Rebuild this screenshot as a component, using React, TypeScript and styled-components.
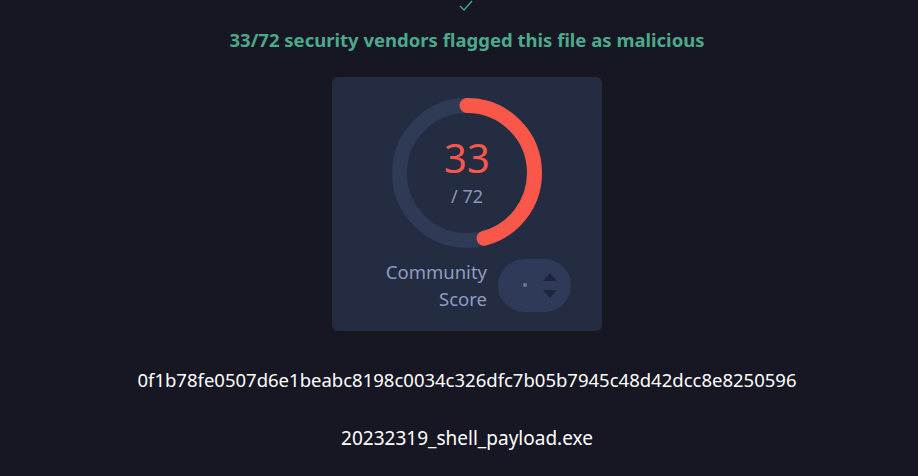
import styled, { createGlobalStyle } from 'styled-components'

const total = 72
const flagged = 33
const ringRadius = 67.5
const ringStroke = 15

const GlobalStyle = createGlobalStyle`
  html, body {
    margin: 0;
    padding: 0;
    background: #171723;
  }
  body {
    font-family: 'Noto Sans', 'Open Sans', sans-serif;
    color: #ffffff;
  }
`

const Page = styled.main`
  display: flex;
  flex-direction: column;
  align-items: center;
  padding-left: 16px;
  min-height: 476px;
  box-sizing: border-box;
`

const CheckMark = styled.svg`
  display: block;
  margin-top: -1px;
  margin-left: -2px;
  width: 16px;
  height: 13px;
`

const Verdict = styled.h2`
  margin: 16px 0 0;
  font-size: 18.5px;
  font-weight: 700;
  line-height: 24px;
  color: #4caa8c;
`

const Card = styled.section`
  margin-top: 25px;
  width: 270px;
  height: 254px;
  box-sizing: border-box;
  padding-top: 21px;
  border-radius: 6px;
  background: #242c42;
  display: flex;
  flex-direction: column;
  align-items: center;
`

const Gauge = styled.div`
  position: relative;
  width: 150px;
  height: 150px;
`

const GaugeLabel = styled.div`
  position: absolute;
  inset: 0;
  display: flex;
  flex-direction: column;
  align-items: center;
  justify-content: center;
  gap: 5px;
  padding-bottom: 3px;
  box-sizing: border-box;
`

const Score = styled.span`
  font-size: 40px;
  line-height: 44px;
  color: #fa574b;
`

const OutOf = styled.span`
  font-size: 18px;
  line-height: 22px;
  color: #8c97b5;
`

const CommunityRow = styled.div`
  margin-top: 10px;
  display: flex;
  align-items: center;
  gap: 11px;
`

const CommunityLabel = styled.div`
  width: 124px;
  text-align: right;
  font-size: 18.5px;
  line-height: 27px;
  color: #8d9cc2;
`

const Voter = styled.div`
  width: 73px;
  height: 53px;
  border-radius: 27px;
  background: #2e3a57;
  display: flex;
  align-items: center;
  padding-left: 25px;
  box-sizing: border-box;
  gap: 16px;
`

const Dot = styled.span`
  width: 4px;
  height: 4px;
  border-radius: 50%;
  background: #6f7a94;
`

const Arrows = styled.div`
  display: flex;
  flex-direction: column;
  gap: 9px;
`

const Arrow = styled.span<{ $down?: boolean }>`
  width: 0;
  height: 0;
  border-left: 7px solid transparent;
  border-right: 7px solid transparent;
  ${(p) => (p.$down ? 'border-top: 8px solid #1d263c;' : 'border-bottom: 8px solid #1d263c;')}
`

const Hash = styled.div`
  margin-top: 37px;
  font-size: 18.5px;
  line-height: 24px;
  color: #ffffff;
`

const FileName = styled.div`
  margin-top: 34px;
  font-size: 19px;
  line-height: 24px;
  color: #ffffff;
`

function Ring() {
  const c = 2 * Math.PI * ringRadius
  const filled = (flagged / total) * c
  return (
    <svg width="150" height="150" viewBox="0 0 150 150">
      <circle cx="75" cy="75" r={ringRadius} fill="none" stroke="#2e3a56" strokeWidth={ringStroke} />
      <circle
        cx="75"
        cy="75"
        r={ringRadius}
        fill="none"
        stroke="#fa574b"
        strokeWidth={ringStroke}
        strokeLinecap="round"
        strokeDasharray={`${filled} ${c}`}
        transform="rotate(-90 75 75)"
      />
    </svg>
  )
}

export default function App() {
  return (
    <>
      <GlobalStyle />
      <Page>
        <CheckMark viewBox="0 0 16 13">
          <polyline points="2,7 6,11 14,2" fill="none" stroke="#3fa88e" strokeWidth="1.4" />
        </CheckMark>
        <Verdict>
          {flagged}/{total} security vendors flagged this file as malicious
        </Verdict>
        <Card>
          <Gauge>
            <Ring />
            <GaugeLabel>
              <Score>{flagged}</Score>
              <OutOf>/ {total}</OutOf>
            </GaugeLabel>
          </Gauge>
          <CommunityRow>
            <CommunityLabel>
              Community
              <br />
              Score
            </CommunityLabel>
            <Voter>
              <Dot />
              <Arrows>
                <Arrow />
                <Arrow $down />
              </Arrows>
            </Voter>
          </CommunityRow>
        </Card>
        <Hash>0f1b78fe0507d6e1beabc8198c0034c326dfc7b05b7945c48d42dcc8e8250596</Hash>
        <FileName>20232319_shell_payload.exe</FileName>
      </Page>
    </>
  )
}
